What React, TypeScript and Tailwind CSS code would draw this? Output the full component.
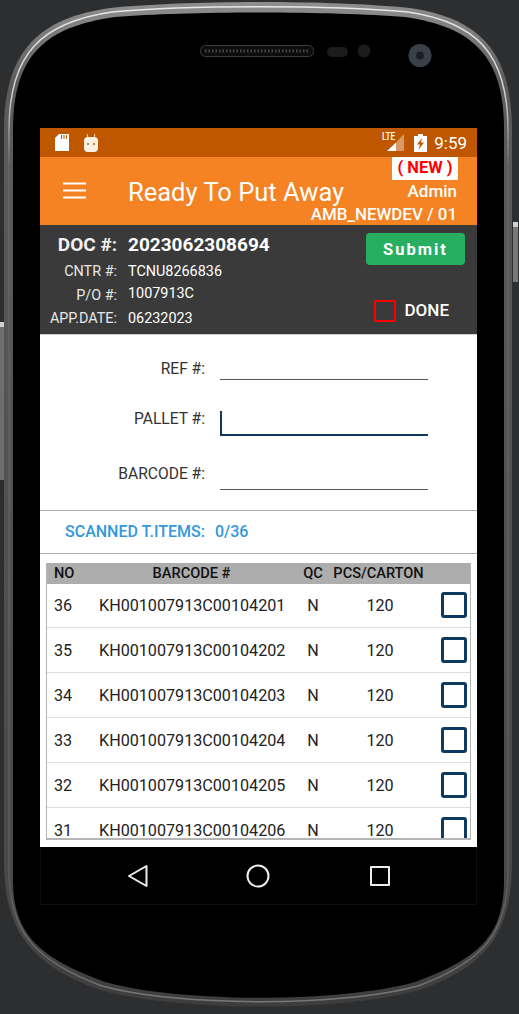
const rows = [
  ["36", "KH001007913C00104201"],
  ["35", "KH001007913C00104202"],
  ["34", "KH001007913C00104203"],
  ["33", "KH001007913C00104204"],
  ["32", "KH001007913C00104205"],
  ["31", "KH001007913C00104206"],
];

function Frame() {
  const outer = "M4 130 C4 50 40 18 110 8 C190 0 330 0 410 8 C478 18 512 50 512 130 L512 860 C512 930 490 965 420 990 C340 1012 180 1012 100 990 C30 965 4 930 4 860 Z";
  const mid = "M9 130 C9 52 43 22 112 12 C190 5 330 5 408 12 C475 22 508 52 508 130 L508 870 C508 932 485 961 418 986 C340 1007 180 1007 102 986 C35 961 9 932 9 870 Z";
  const inner = "M13 130 C13 55 45 27 115 17 C190 11 330 11 405 17 C472 27 504 55 504 130 L504 880 C504 935 480 958 415 982 C340 1003 180 1003 105 982 C40 958 13 935 13 880 Z";
  return (
    <svg className="absolute left-0 top-0" width="519" height="1014" viewBox="0 0 519 1014">
      <defs>
        <linearGradient id="rim" x1="0" y1="0" x2="0" y2="1">
          <stop offset="0" stopColor="#8f8f8f" />
          <stop offset="0.08" stopColor="#5c5c5c" />
          <stop offset="0.9" stopColor="#484848" />
          <stop offset="1" stopColor="#3d3d3d" />
        </linearGradient>
        <linearGradient id="shine" x1="0" y1="0" x2="0" y2="1">
          <stop offset="0" stopColor="#e8e8e8" />
          <stop offset="0.09" stopColor="#d0d0d0" />
          <stop offset="0.16" stopColor="#666666" />
          <stop offset="0.88" stopColor="#5a5a5a" />
          <stop offset="1" stopColor="#777777" />
        </linearGradient>
      </defs>
      <path d={outer} fill="url(#rim)" />
      <path d={mid} fill="none" stroke="url(#shine)" strokeWidth="1.5" />
      <path d={inner} fill="#000" />
      <rect x="0" y="322" width="4" height="158" fill="#6e6e6e" />
      <rect x="0" y="322" width="4" height="5" fill="#cfcfcf" />
      <rect x="513" y="222" width="5" height="60" fill="#777" />
      <rect x="513" y="222" width="5" height="5" fill="#cfcfcf" />
      <rect x="200.5" y="45.5" width="113" height="11" rx="5" fill="#0d0d0d" stroke="#3c3c3c" />
      <line x1="205" y1="51" x2="309" y2="51" stroke="#484848" strokeWidth="3" strokeDasharray="1.5 2" />
      <rect x="327" y="47" width="21" height="10" rx="5" fill="#1a1c1e" />
      <circle cx="364" cy="51" r="6.5" fill="#1a1c1e" />
      <circle cx="420" cy="55.5" r="11.5" fill="#3a4048" />
      <circle cx="420" cy="55.5" r="4" fill="#1c2024" />
    </svg>
  );
}

function Field({ label, active, labelClass }: { label: string; active?: boolean; labelClass: string }) {
  return (
    <div className="flex h-[55px] items-center">
      <div className={`w-[165px] text-right text-[15.6px] text-[#333] ${labelClass}`}>{label}</div>
      <div className={`relative ml-[15px] w-[208px] ${active ? "h-[37px] border-b-2 border-[#0f3a5f]" : "h-[35px] border-b border-[#555]"}`}>
        {active && <div className="absolute bottom-0 left-0 h-[23px] w-[2px] bg-[#0f3a5f]" />}
      </div>
    </div>
  );
}

export default function App() {
  return (
    <div className="relative h-[1014px] w-[519px] overflow-hidden bg-[#2d2e30] font-['Roboto',sans-serif]">
      <Frame />
      <div className="relative ml-[40px] w-[437px] pt-[128px]">
        <div className="flex h-[29px] items-center bg-[#bf5700] text-white">
          <svg className="ml-[15px]" width="14" height="17" viewBox="0 0 14 17"><path d="M4 0H14V17H0V4Z M6 1V5H7V1Z M8.5 1V5H9.5V1Z M11 1V5H12V1Z" fill="#fff" fillRule="evenodd" /></svg>
          <svg className="ml-[15px]" width="14" height="18" viewBox="0 0 14 18">
            <path d="M3 0L4 4H10L11 0" stroke="#f2d8c0" fill="none" />
            <rect x="0" y="3" width="14" height="15" rx="4" fill="#fdf1e6" />
            <circle cx="4" cy="10" r="1" fill="#bf5700" />
            <circle cx="10" cy="10" r="1" fill="#bf5700" />
          </svg>
          <div className="relative ml-auto mr-[10px] flex items-center">
            <span className="absolute left-[1px] top-[-2px] origin-left scale-x-75 text-[11px] font-medium leading-none">LTE</span>
            <svg width="23" height="18" viewBox="0 0 23 18"><path d="M6 17H15V8.5Z" fill="#fff" /><path d="M15 17H23V0L15 8.5Z" fill="#fff" fillOpacity="0.4" /></svg>
            <svg className="ml-[10px]" width="13" height="18" viewBox="0 0 13 18"><path d="M4 0H9V2H13V18H0V2H4Z M8 4L3 10.5H6L4.5 16L10 8.5H7Z" fill="#fff" fillRule="evenodd" /></svg>
            <span className="ml-[7px] mt-[2px] text-[17px] leading-none">9:59</span>
          </div>
        </div>
        <div className="relative flex h-[68px] items-center bg-[#f58223] text-white">
          <svg className="ml-[23px]" width="23" height="18" viewBox="0 0 23 18"><path d="M0 1.5H23M0 8.5H23M0 15.5H23" stroke="#fff" strokeWidth="2" /></svg>
          <div className="ml-[42px] mt-[4px] text-[25.5px] leading-none">Ready To Put Away</div>
          <div className="absolute right-[20px] top-0 flex flex-col items-end">
            <div className="mr-[-1px] flex h-[23px] w-[66px] items-center justify-center bg-white text-[16.5px] font-bold leading-none text-[#ff0000]">( NEW )</div>
            <div className="mt-[1px] text-[17px] font-medium leading-[21px]">Admin</div>
            <div className="mt-[1px] text-[16.9px] font-medium leading-[23px]">AMB_NEWDEV / 01</div>
          </div>
        </div>
        <div className="flex h-[109px] bg-[#3a3a3a] text-white">
          <div className="w-[77px] text-right">
            <div className="mt-[7px] text-[19px] font-bold leading-[25px] text-[#f2f2f2]">DOC #:</div>
            <div className="mt-[3px] text-[14.4px] leading-[24px] text-[#e8e8e8]">CNTR #:</div>
            <div className="text-[14.4px] leading-[24px] text-[#e8e8e8]">P/O #:</div>
            <div className="-mt-px text-[14.4px] leading-[24px] text-[#e8e8e8]">APP.DATE:</div>
          </div>
          <div className="ml-[11px]">
            <div className="mt-[7px] text-[19px] font-bold leading-[25px]">2023062308694</div>
            <div className="mt-[3px] text-[14.4px] leading-[24px]">TCNU8266836</div>
            <div className="text-[14.4px] leading-[20px]">1007913C</div>
            <div className="mt-[3px] text-[14.4px] leading-[24px]">06232023</div>
          </div>
          <div className="ml-auto mr-[12px] flex flex-col items-end">
            <div className="mt-[8px] flex h-[32px] w-[99px] items-center justify-center rounded-[4px] bg-[#27ae60] pt-[2px] text-[16.5px] font-bold tracking-[2px]">Submit</div>
            <div className="mr-[16px] mt-[33px] flex items-center">
              <div className="h-[22px] w-[22px] rounded-[2px] border-2 border-[#ff0000]" />
              <span className="ml-[9px] text-[17px] font-medium">DONE</span>
            </div>
          </div>
        </div>
        <div className="h-[513px] bg-white">
          <div className="border-t border-[#ccc]">
            <Field label="REF #:" labelClass="pt-[14px]" />
            <Field label="PALLET #:" active labelClass="pt-[4px]" />
            <Field label="BARCODE #:" labelClass="pt-[4px]" />
          </div>
          <div className="mt-[10px] flex h-[44px] items-center border-y border-[#aaa] pl-[25px] text-[16px] font-medium text-[#3498db]">
            <span>SCANNED T.ITEMS:</span>
            <span className="ml-[10px]">0/36</span>
          </div>
          <div className="mx-[6px] mt-[9px] h-[277px] overflow-hidden border-x border-b-2 border-[#b5b5b5]">
            <div className="relative flex h-[21px] items-center bg-[#adadad] text-[14.6px] font-medium text-[#111]">
              <div className="w-[35px] pl-[7px]">NO</div>
              <div className="w-[219px] text-center">BARCODE #</div>
              <div className="w-[24px] text-center">QC</div>
              <div className="w-[107px] text-center">PCS/CARTON</div>
            </div>
            <div className="-mt-px">
              {rows.map(([no, code]) => (
                <div key={no} className="flex h-[45px] items-center border-b border-[#ddd] pt-[2px] text-[16.15px] text-[#222]">
                  <div className="w-[52px] pl-[7px]">{no}</div>
                  <div className="w-[196px]">{code}</div>
                  <div className="w-[36px] text-center">N</div>
                  <div className="w-[98px] text-center">120</div>
                  <div className="ml-[12px] -mt-[2px] h-[26px] w-[26px] rounded-[3px] border-[3px] border-[#0f3a5f]" />
                </div>
              ))}
            </div>
          </div>
        </div>
        <div className="flex h-[58px] items-center border-x border-b border-[#0a0f0f] bg-black">
          <svg className="ml-[86px]" width="22" height="24" viewBox="0 0 22 24"><path d="M19.5 2V22L2 12Z" fill="none" stroke="#eee" strokeWidth="2" strokeLinejoin="round" /></svg>
          <svg className="ml-[97px]" width="24" height="24" viewBox="0 0 24 24"><circle cx="12" cy="12" r="10.5" fill="none" stroke="#eee" strokeWidth="2" /></svg>
          <svg className="ml-[99px]" width="22" height="22" viewBox="0 0 22 22"><rect x="2" y="2" width="18" height="18" fill="none" stroke="#eee" strokeWidth="2" strokeLinejoin="round" /></svg>
        </div>
      </div>
    </div>
  );
}
